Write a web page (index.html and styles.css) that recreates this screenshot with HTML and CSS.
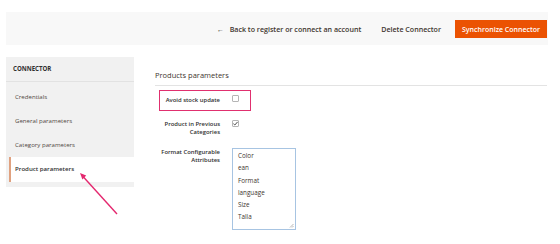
FILE: index.html
```html
<!DOCTYPE html>
<html lang="en">
<head>
<meta charset="utf-8">
<title>Connector - Product parameters</title>
<link rel="stylesheet" href="styles.css">
</head>
<body>
<div class="page">
  <header class="topbar">
    <a class="back-link" href="#"><span class="back-arrow">&#8592;</span>Back to register or connect an account</a>
    <a class="delete-link" href="#">Delete Connector</a>
    <button class="sync-btn" type="button">Synchronize Connector</button>
  </header>
  <div class="main">
    <nav class="sidebar">
      <div class="sidebar-title">CONNECTOR</div>
      <ul class="nav-list">
        <li class="nav-item">Credentials</li>
        <li class="nav-item">General parameters</li>
        <li class="nav-item">Category parameters</li>
        <li class="nav-item active">Product parameters</li>
      </ul>
    </nav>
    <section class="content">
      <h2 class="section-title">Products parameters</h2>
      <div class="row row-first highlight">
        <label class="label">Avoid stock update</label>
        <span class="checkbox"></span>
      </div>
      <div class="row row-second">
        <label class="label">Product in Previous Categories</label>
        <span class="checkbox checked">
          <svg viewBox="0 0 7 7" width="7" height="7"><path d="M1.4 3.7 L2.8 5 L5.6 1.9" fill="none" stroke="#4a4a4a" stroke-width="1"/></svg>
        </span>
      </div>
      <div class="row row-third">
        <label class="label">Format Configurable Attributes</label>
        <div class="multiselect">
          <div class="option">Color</div>
          <div class="option">ean</div>
          <div class="option">Format</div>
          <div class="option">language</div>
          <div class="option">Size</div>
          <div class="option">Talla</div>
          <svg class="resize" viewBox="0 0 5 5" width="5" height="5"><path d="M4.5 1 L1 4.5 M4.5 3 L3 4.5" stroke="#9a9a9a" stroke-width="0.7"/></svg>
        </div>
      </div>
    </section>
  </div>
</div>
<svg class="annotation-arrow" width="560" height="244" viewBox="0 0 560 244">
  <line x1="117" y1="214" x2="83" y2="176.5" stroke="#e4286f" stroke-width="1.4"/>
  <polygon points="80,173 86.2,175.6 82.4,179.4" fill="#e4286f"/>
</svg>
</body>
</html>
```

FILE: styles.css
```css
* { box-sizing: border-box; }
html, body { margin: 0; padding: 0; background: #ffffff; }
body {
  font-family: "Open Sans", "Liberation Sans", sans-serif;
  color: #41362f;
  position: relative;
  width: 560px;
  height: 244px;
  overflow: hidden;
}
.page { padding: 12px 12px 0 6px; }

.topbar {
  height: 33px;
  background: #f8f8f8;
  display: flex;
  align-items: center;
  justify-content: flex-end;
  padding-right: 1px;
}
.back-link, .delete-link {
  font-size: 7.1px;
  font-weight: 600;
  color: #41362f;
  text-decoration: none;
  white-space: nowrap;
}
.back-arrow { margin-right: 6px; font-weight: 400; }
.delete-link { margin-left: 20px; }
.sync-btn {
  margin-left: 14px;
  width: 92px;
  height: 18px;
  border: none;
  padding: 0;
  background: #eb5202;
  color: #ffffff;
  font-family: inherit;
  font-size: 7px;
  font-weight: 600;
  margin-top: 1px;
}

.main { display: flex; margin-top: 12px; }

.sidebar {
  width: 128px;
  background: #f1f1f1;
  padding-bottom: 5px;
  align-self: flex-start;
}
.sidebar-title {
  height: 25px;
  padding-left: 7px;
  font-size: 6.1px;
  font-weight: 700;
  line-height: 24px;
  border-bottom: 1px solid #e2e2e2;
  color: #303030;
}
.nav-list { list-style: none; margin: 0; padding: 3px 0 0; }
.nav-item {
  height: 24px;
  line-height: 24px;
  padding-left: 9px;
  font-size: 6.1px;
  color: #514943;
}
.nav-item.active {
  height: 25px;
  margin-left: 3px;
  border-left: 2px solid #e0a17f;
  padding-left: 4px;
  background: #ffffff;
  font-weight: 600;
  color: #303030;
}

.content {
  flex: 1;
  margin-left: 21px;
  margin-right: 1px;
}
.section-title {
  margin: 13px 0 0;
  padding-bottom: 4px;
  font-size: 7.5px;
  line-height: 11px;
  font-weight: 400;
  color: #41362f;
  border-bottom: 1px solid #e3e3e3;
}

.row {
  display: grid;
  grid-template-columns: 65px auto;
  column-gap: 12px;
  align-items: start;
}
.row-first { margin-top: 9px; }
.row-second { margin-top: 16px; }
.row-third { margin-top: 12px; }
.label {
  text-align: right;
  font-size: 5.9px;
  line-height: 8.2px;
  font-weight: 600;
  color: #303030;
}
.row-first .label { padding-top: 0.5px; }
.highlight { position: relative; }
.highlight::after {
  content: "";
  position: absolute;
  left: 4px;
  top: -5px;
  width: 90px;
  height: 19px;
  border: 1.5px solid #e0306f;
}
.checkbox {
  width: 7px;
  height: 7px;
  border: 1px solid #b5b5b5;
  border-radius: 1px;
  background: #ffffff;
  display: block;
  position: relative;
}
.checkbox svg { position: absolute; left: -1px; top: -1px; }

.multiselect {
  position: relative;
  width: 64px;
  height: 82px;
  border: 1px solid #a7c4e2;
  padding: 1px 0 0 5px;
}
.option {
  font-size: 6.3px;
  line-height: 12.2px;
  color: #41362f;
}
.resize { position: absolute; right: 1px; bottom: 1px; }

.annotation-arrow {
  position: absolute;
  left: 0;
  top: 0;
  pointer-events: none;
}
```
